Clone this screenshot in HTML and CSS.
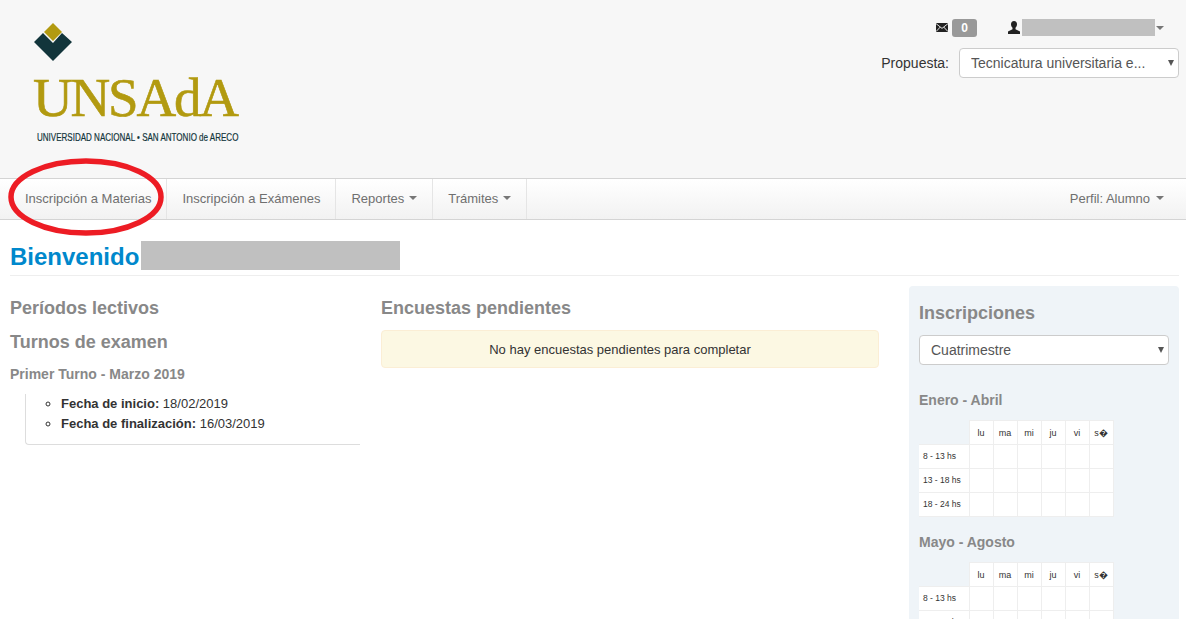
FILE: index.html
```html
<!DOCTYPE html>
<html lang="es">
	<head>
		<meta charset="utf-8" />
		<title>UNSAdA - Autogestión</title>
		<link rel="stylesheet" href="styles.css">
	</head>
	<body>
		<header class="topHeader">
			<div class="logo">
				<svg class="logoMark" width="38" height="38" viewBox="0 0 38 38">
					<polygon fill="#b29a10" points="19,0 28,9 19,18 10,9" />
					<polygon fill="#12353b" points="0,19 9,10 19,20 28,10 38,19 19,38" />
				</svg>
				<div class="logoName">UNSAdA</div>
				<div class="logoTag">UNIVERSIDAD NACIONAL • SAN ANTONIO de ARECO</div>
			</div>
			<div class="headerRight">
				<div class="userRow">
					<svg class="iconMail" width="12" height="9" viewBox="0 0 12 9">
						<rect width="12" height="9" fill="#222" />
						<path fill="none" stroke="#f7f7f7" stroke-width="0.900" d="M0 .6l6 4.800 6-4.800M0 8.600l4.300-4.600M12 8.600L7.700 4" />
					</svg>
					<span class="badge">0</span>
					<svg class="iconUser" width="12" height="13" viewBox="0 0 12 13">
						<path fill="#222" d="M6 0c2 0 3 1.400 3 3.300 0 1.500-.6 2.800-1.500 3.500v1.400L12 10.500V13H0v-2.500l4.500-2.300V6.800C3.600 6.100 3 4.800 3 3.300 3 1.400 4 0 6 0z" />
					</svg>
					<span class="blurName"></span>
					<span class="caret caretUser"></span>
				</div>
				<div class="propuestaRow">
					<label class="propuestaLabel">Propuesta:</label>
					<div class="selectWrap selectPropuesta">
						<select><option>Tecnicatura universitaria e...</option></select>
					</div>
				</div>
			</div>
		</header>

		<nav class="navBar">
			<ul class="navList">
				<li class="navItem">Inscripción a Materias</li>
				<li class="navItem">Inscripción a Exámenes</li>
				<li class="navItem">Reportes <span class="caret"></span></li>
				<li class="navItem">Trámites <span class="caret"></span></li>
			</ul>
			<div class="navPerfil">Perfil: Alumno <span class="caret"></span></div>
		</nav>

		<svg class="redCircle" width="160" height="82" viewBox="0 0 160 82">
			<ellipse cx="78" cy="40" rx="75" ry="36" fill="none" stroke="#ed1c24" stroke-width="5.500" />
		</svg>

		<main class="content">
			<div class="pageTitle">
				<h1>Bienvenido</h1>
				<span class="blurTitle"></span>
			</div>
			<div class="columns">
				<section class="colLeft">
					<h3>Períodos lectivos</h3>
					<h3 class="turnos">Turnos de examen</h3>
					<h4>Primer Turno - Marzo 2019</h4>
					<div class="turnoBox">
						<ul>
							<li><b>Fecha de inicio:</b> 18/02/2019</li>
							<li><b>Fecha de finalización:</b> 16/03/2019</li>
						</ul>
					</div>
				</section>
				<section class="colMid">
					<h3>Encuestas pendientes</h3>
					<div class="alertBox">No hay encuestas pendientes para completar</div>
				</section>
				<aside class="colRight">
					<h3 class="panelTitle">Inscripciones</h3>
					<div class="selectWrap selectPeriodo">
						<select><option>Cuatrimestre</option></select>
					</div>
					<h4 class="tableTitle">Enero - Abril</h4>
					<table class="horario">
						<tr><th class="blank"></th><th>lu</th><th>ma</th><th>mi</th><th>ju</th><th>vi</th><th>s�</th></tr>
						<tr><td class="hora">8 - 13 hs</td><td></td><td></td><td></td><td></td><td></td><td></td></tr>
						<tr><td class="hora">13 - 18 hs</td><td></td><td></td><td></td><td></td><td></td><td></td></tr>
						<tr><td class="hora">18 - 24 hs</td><td></td><td></td><td></td><td></td><td></td><td></td></tr>
					</table>
					<h4 class="tableTitle second">Mayo - Agosto</h4>
					<table class="horario">
						<tr><th class="blank"></th><th>lu</th><th>ma</th><th>mi</th><th>ju</th><th>vi</th><th>s�</th></tr>
						<tr><td class="hora">8 - 13 hs</td><td></td><td></td><td></td><td></td><td></td><td></td></tr>
						<tr><td class="hora">13 - 18 hs</td><td></td><td></td><td></td><td></td><td></td><td></td></tr>
						<tr><td class="hora">18 - 24 hs</td><td></td><td></td><td></td><td></td><td></td><td></td></tr>
					</table>
				</aside>
			</div>
		</main>
	</body>
</html>
```

FILE: styles.css
```css
html, body {
	height: 100%;
	overflow: hidden;
}
body {
	margin: 0;
	position: relative;
	background: #fff;
	color: #333;
	font-family: "Liberation Sans", Arial, sans-serif;
	font-size: 13px;
}
.topHeader {
	height: 178px;
	box-sizing: border-box;
	background: #f7f7f7;
	display: flex;
	justify-content: space-between;
	padding: 18px 7px 0 34px;
}
.logo {
	display: flex;
	flex-direction: column;
	padding-top: 5px;
}
.logoMark {
	margin-bottom: 12px;
}
.logoName {
	font-family: "Liberation Serif", "Times New Roman", serif;
	font-size: 55px;
	line-height: 50px;
	letter-spacing: -2.2px;
	color: #b29a10;
	-webkit-text-stroke: 0.6px #b29a10;
	margin-left: -1px;
}
.logoTag {
	margin: 8px 0 0 3px;
	font-size: 11px;
	line-height: 12px;
	color: #12353b;
	-webkit-text-stroke: 0.2px #12353b;
	white-space: nowrap;
	transform: scaleX(0.73);
	transform-origin: left center;
}
.headerRight {
	display: flex;
	flex-direction: column;
	align-items: flex-end;
}
.userRow {
	display: flex;
	align-items: center;
	height: 19px;
	padding-right: 15px;
}
.iconMail {
	margin-right: 4px;
}
.badge {
	width: 25px;
	height: 18px;
	border-radius: 3px;
	background: #999;
	color: #fff;
	font-size: 12px;
	font-weight: bold;
	line-height: 18px;
	text-align: center;
	margin-right: 31px;
}
.iconUser {
	margin-right: 2px;
}
.blurName {
	width: 133px;
	height: 17px;
	background: #c0c0c0;
	margin-right: 1px;
}
.caret {
	display: inline-block;
	width: 0;
	height: 0;
	border-top: 4px solid #777;
	border-left: 4px solid transparent;
	border-right: 4px solid transparent;
	vertical-align: middle;
	margin-left: 2px;
}
.caretUser {
	margin-left: 0;
}
.propuestaRow {
	display: flex;
	align-items: center;
	margin-top: 11px;
	font-size: 14px;
}
.propuestaLabel {
	margin-right: 10px;
	color: #333;
}
.selectWrap {
	position: relative;
}
.selectWrap::after {
	content: "";
	position: absolute;
	right: 5px;
	top: 50%;
	margin-top: -3px;
	border-top: 6px solid #555;
	border-left: 3px solid transparent;
	border-right: 3px solid transparent;
	pointer-events: none;
}
.selectWrap select {
	appearance: none;
	-webkit-appearance: none;
	display: block;
	width: 100%;
	height: 100%;
	box-sizing: border-box;
	background: #fff;
	border: 1px solid #ccc;
	border-radius: 4px;
	padding: 0 11px;
	color: #555;
	font-family: inherit;
	font-size: 14px;
}
.selectPropuesta {
	width: 220px;
	height: 30px;
}
.navBar {
	height: 42px;
	box-sizing: border-box;
	display: flex;
	justify-content: space-between;
	align-items: stretch;
	background: linear-gradient(to bottom, #ffffff, #f2f2f2);
	border-top: 1px solid #d4d4d4;
	border-bottom: 1px solid #d4d4d4;
	padding: 0 22px 0 10px;
	color: #6f6f6f;
	font-size: 13px;
}
.navList {
	display: flex;
	list-style: none;
	margin: 0;
	padding: 0;
}
.navItem {
	display: flex;
	align-items: center;
	gap: 3px;
	padding: 0 15px 2px;
	border-right: 1px solid #e5e5e5;
}
.navPerfil {
	display: flex;
	align-items: center;
	gap: 4px;
	padding-bottom: 2px;
}
.redCircle {
	position: absolute;
	left: 8px;
	top: 157px;
}
.content {
	padding: 0 7px 0 10px;
}
.pageTitle {
	display: flex;
	align-items: flex-end;
	gap: 2px;
	height: 56px;
	box-sizing: border-box;
	padding-bottom: 5px;
	border-bottom: 1px solid #eee;
}
.pageTitle h1 {
	margin: 0 0 -2px;
	font-size: 24px;
	line-height: 30px;
	color: #0088cc;
}
.blurTitle {
	width: 259px;
	height: 29px;
	background: #c0c0c0;
}
.columns {
	display: flex;
	align-items: flex-start;
	margin-top: 10px;
}
h3 {
	margin: 0;
	font-size: 18px;
	line-height: 24px;
	color: #888;
}
h4 {
	margin: 0;
	font-size: 14px;
	line-height: 20px;
	color: #888;
}
.colLeft {
	width: 350px;
	padding-top: 10px;
}
.colLeft .turnos {
	margin-top: 10px;
}
.colLeft h4 {
	margin-top: 10px;
}
.turnoBox {
	margin: 10px 0 0 15px;
	border-left: 1px solid #ddd;
	border-bottom: 1px solid #ddd;
	border-bottom-left-radius: 4px;
	padding-bottom: 10px;
}
.turnoBox ul {
	margin: 0;
	padding-left: 35px;
	list-style: circle;
	line-height: 20px;
}
.colMid {
	width: 498px;
	margin-left: 21px;
	padding-top: 10px;
}
.alertBox {
	margin-top: 10px;
	height: 38px;
	box-sizing: border-box;
	border: 1px solid #fbeed5;
	border-radius: 4px;
	background: #fcf8e3;
	display: flex;
	justify-content: center;
	align-items: center;
	padding-right: 20px;
	color: #333;
}
.colRight {
	width: 270px;
	box-sizing: border-box;
	margin-left: 30px;
	background: #eff4f8;
	border-radius: 4px;
	padding: 15px 10px 20px;
}
.panelTitle {
	line-height: 24px;
}
.selectPeriodo {
	height: 30px;
	margin-top: 10px;
}
.tableTitle {
	margin-top: 25px;
}
.tableTitle.second {
	margin-top: 15px;
}
.horario {
	border-collapse: collapse;
	margin-top: 10px;
	font-size: 9px;
	table-layout: fixed;
}
.horario th, .horario td {
	width: 24px;
	height: 24px;
	box-sizing: border-box;
	padding: 0;
	background: #fff;
	border: 1px solid #eee;
	text-align: center;
	font-weight: normal;
	color: #333;
}
.horario th.blank {
	background: transparent;
	border: none;
	width: 50px;
}
.horario td.hora {
	width: 50px;
	padding: 0 0 2px 4px;
	border-left: none;
	text-align: left;
	white-space: nowrap;
	font-size: 8.5px;
}
```
